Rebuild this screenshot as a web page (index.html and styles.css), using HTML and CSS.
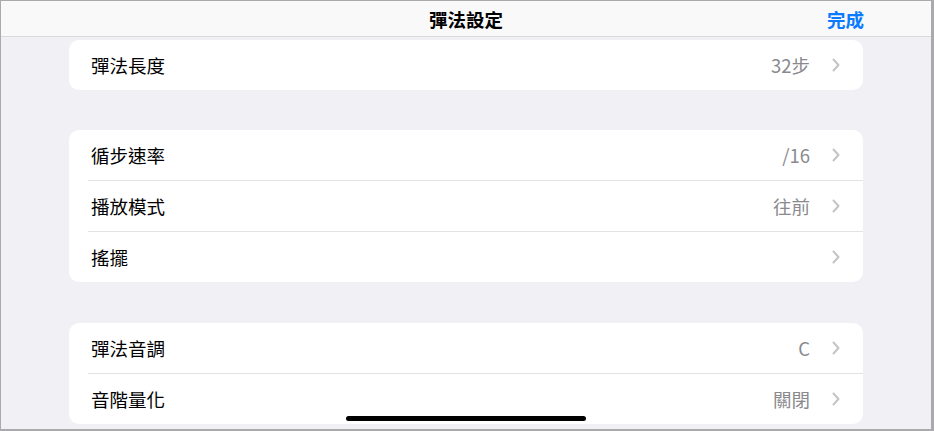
FILE: index.html
```html
<!DOCTYPE html>
<html lang="zh-Hant">
<head>
    <meta charset="UTF-8">
    <meta name="viewport" content="width=device-width, initial-scale=1.0">
    <title>彈法設定</title>
    <link rel="stylesheet" href="styles.css">
</head>
<body>
    <div class="screen">
        <div class="nav-bar">
            <div class="nav-title">彈法設定</div>
            <div class="nav-done">完成</div>
        </div>
        <div class="content">
            <div class="group">
                <div class="row">
                    <span class="label">彈法長度</span>
                    <span class="value">32步</span>
                    <svg class="chevron" width="8" height="14" viewBox="0 0 8 14"><polyline points="1.5,1.5 6.5,7 1.5,12.5" /></svg>
                </div>
            </div>
            <div class="group">
                <div class="row">
                    <span class="label">循步速率</span>
                    <span class="value">/16</span>
                    <svg class="chevron" width="8" height="14" viewBox="0 0 8 14"><polyline points="1.5,1.5 6.5,7 1.5,12.5" /></svg>
                </div>
                <div class="row">
                    <span class="label">播放模式</span>
                    <span class="value">往前</span>
                    <svg class="chevron" width="8" height="14" viewBox="0 0 8 14"><polyline points="1.5,1.5 6.5,7 1.5,12.5" /></svg>
                </div>
                <div class="row">
                    <span class="label">搖擺</span>
                    <span class="value"></span>
                    <svg class="chevron" width="8" height="14" viewBox="0 0 8 14"><polyline points="1.5,1.5 6.5,7 1.5,12.5" /></svg>
                </div>
            </div>
            <div class="group">
                <div class="row">
                    <span class="label">彈法音調</span>
                    <span class="value">C</span>
                    <svg class="chevron" width="8" height="14" viewBox="0 0 8 14"><polyline points="1.5,1.5 6.5,7 1.5,12.5" /></svg>
                </div>
                <div class="row">
                    <span class="label">音階量化</span>
                    <span class="value">關閉</span>
                    <svg class="chevron" width="8" height="14" viewBox="0 0 8 14"><polyline points="1.5,1.5 6.5,7 1.5,12.5" /></svg>
                </div>
            </div>
        </div>
        <div class="home-indicator"></div>
    </div>
</body>
</html>
```

FILE: styles.css
```css
body {
    margin: 0;
    font-family: "Noto Sans CJK TC", "Noto Sans", sans-serif;
    background: #ffffff;
}
.screen {
    position: relative;
    width: 934px;
    height: 431px;
    box-sizing: border-box;
    border-top: 1px solid #aaaaad;
    border-left: 1px solid #aaaaad;
    border-right: 3px solid #aaaaad;
    border-bottom: 2px solid #aaaaad;
    background: #f1f0f5;
    overflow: hidden;
    display: flex;
    flex-direction: column;
}
.nav-bar {
    position: relative;
    height: 35px;
    flex-shrink: 0;
    background: #f9f9f9;
    border-bottom: 1px solid #d9d9dc;
    display: flex;
    justify-content: center;
    align-items: center;
}
.nav-title {
    font-size: 18.5px;
    font-weight: 600;
    color: #000;
}
.nav-done {
    position: absolute;
    right: 67px;
    top: 0;
    bottom: 0;
    display: flex;
    align-items: center;
    font-size: 18.5px;
    font-weight: 600;
    color: #0a7aff;
}
.content {
    display: flex;
    flex-direction: column;
    gap: 40px;
    padding: 3px 0 0 68px;
}
.group {
    width: 794px;
    background: #ffffff;
    border-radius: 10px;
}
.group:last-child {
    margin-top: 1px;
}
.row {
    display: flex;
    align-items: center;
    height: 50px;
    margin-left: 19px;
    padding-right: 23px;
    border-bottom: 1px solid #e3e3e6;
}
.row:last-child {
    border-bottom: none;
}
.label {
    flex: 1;
    padding-left: 3px;
    font-size: 18.5px;
    color: #000;
}
.value {
    font-size: 18.5px;
    color: #8a8a8e;
    margin-right: 22px;
}
.chevron {
    fill: none;
    stroke: #c4c4c7;
    stroke-width: 2;
    stroke-linecap: round;
    stroke-linejoin: round;
}
.home-indicator {
    position: absolute;
    left: 345px;
    bottom: 8px;
    width: 240px;
    height: 5px;
    border-radius: 3px;
    background: #000;
}
```
